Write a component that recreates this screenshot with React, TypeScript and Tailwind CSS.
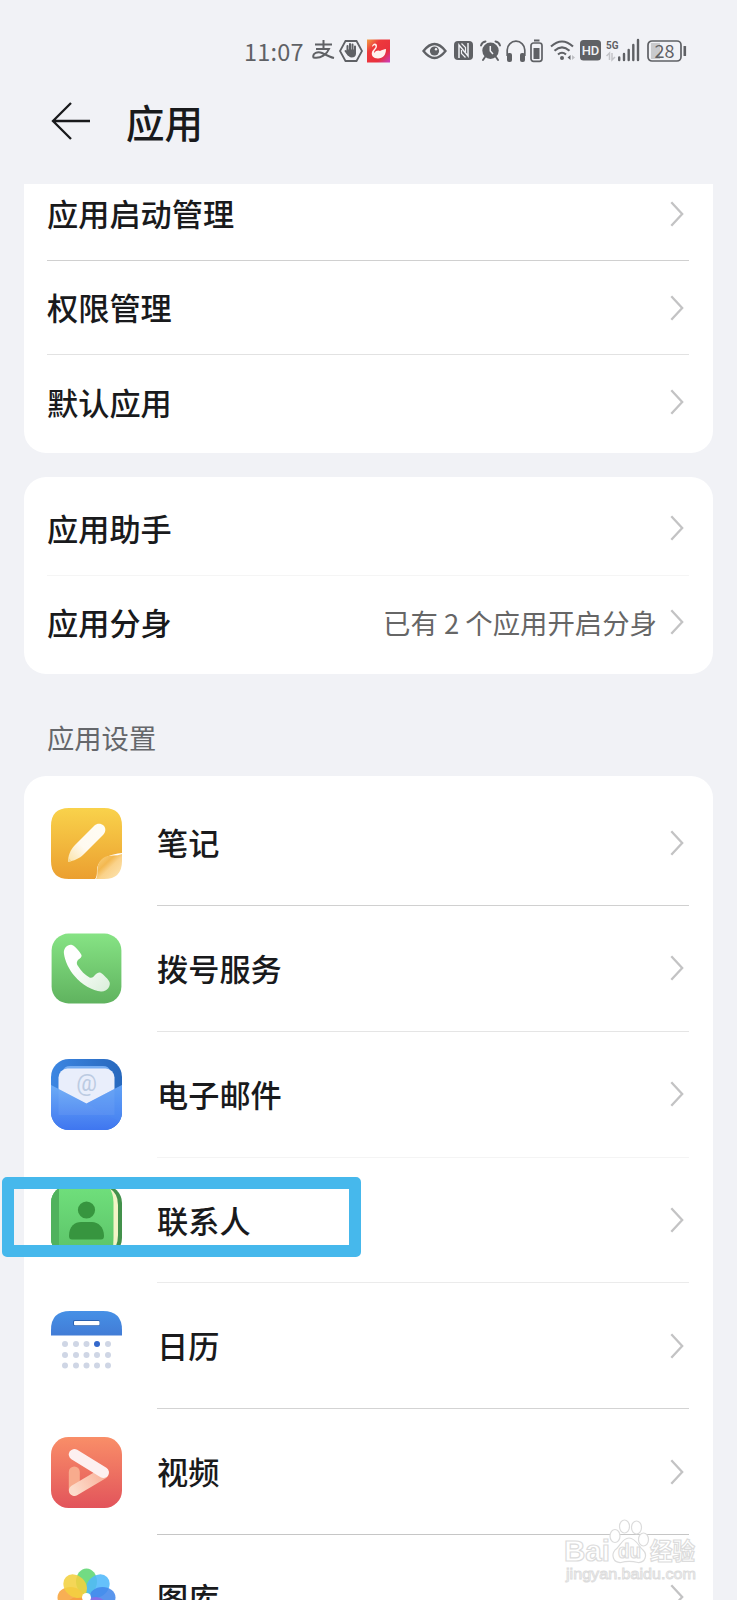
import type { ReactNode } from "react";
import clsx from "clsx";

const ink = "#5f6165";

const Chevron = () => (
  <svg className="mr-[5px] shrink-0" width="14" height="26" viewBox="0 0 14 26" fill="none">
    <path d="M1.3 1.2 12.2 13 1.3 24.8" stroke="#c3c3c4" strokeWidth="2.3" />
  </svg>
);

const NotesIcon = () => (
  <svg width="71" height="71" viewBox="0 0 71 71">
    <defs>
      <linearGradient id="notes" x1="0" y1="0" x2="0" y2="1">
        <stop offset="0" stopColor="#f9d24b" />
        <stop offset="1" stopColor="#eb9f30" />
      </linearGradient>
      <linearGradient id="pen" x1="1" y1="0" x2="0" y2="1">
        <stop offset="0" stopColor="#fffdf4" />
        <stop offset="0.6" stopColor="#fffaf0" />
        <stop offset="1" stopColor="#fbe3a8" />
      </linearGradient>
      <linearGradient id="curl" x1="0" y1="0" x2="1" y2="1">
        <stop offset="0" stopColor="#fbd88b" />
        <stop offset="0.38" stopColor="#f3b850" />
        <stop offset="0.55" stopColor="#fad28a" />
        <stop offset="1" stopColor="#fde6b5" />
      </linearGradient>
    </defs>
    <path d="M18 0H53Q71 0 71 18V45C60 46 47 50 46 62Q46 70 44 71H18Q0 71 0 53V18Q0 0 18 0Z" fill="url(#notes)" />
    <path d="M71 46V53Q71 71 53 71H45C47 68 46 65 46.500 60C48 50 55 47.500 62 47.500Q67 47.500 71 46Z" fill="url(#curl)" />
    <path d="M17 54C17 48 19 42 24 37L43.500 17.500C46 15 50 15 52.500 17.500C55 20 55 24 52 27L33 46C28 51 23 52.500 17 54Z" fill="url(#pen)" />
    <path d="M17 54 18 50.500 20.500 53Z" fill="#f5d78a" />
  </svg>
);

const PhoneIcon = () => (
  <svg width="71" height="71" viewBox="0 0 71 71">
    <defs>
      <linearGradient id="phone" x1="0" y1="0" x2="0" y2="1">
        <stop offset="0" stopColor="#86e384" />
        <stop offset="1" stopColor="#60b35f" />
      </linearGradient>
      <linearGradient id="handset" x1="0" y1="0" x2="1" y2="1">
        <stop offset="0.3" stopColor="#ffffff" />
        <stop offset="1" stopColor="#d9eed9" />
      </linearGradient>
    </defs>
    <rect x="0.600" y="0.600" width="69.800" height="69.800" rx="17" fill="url(#phone)" />
    <path
      d="M13 21C12 15 17 11 21 12C24 13 29 19 30.500 22C31 24 29.500 25 27.500 26.500C26 28 25 30 27 33C30 38 34 42 38.500 44.500C41 45.500 42.500 44 44 42C46 40 48 39 50 40C53 42 57 46 58.500 49C60 53 56 59 50 58.500C42 58 30 51 24 43.500C18 37 14 28 13 21Z"
      fill="url(#handset)"
    />
  </svg>
);

const MailIcon = () => (
  <svg width="71" height="71" viewBox="0 0 71 71">
    <defs>
      <linearGradient id="mailBack" x1="0" y1="0" x2="1" y2="0">
        <stop offset="0" stopColor="#3c86e2" />
        <stop offset="1" stopColor="#2768bd" />
      </linearGradient>
      <linearGradient id="mailFront" x1="0" y1="0" x2="0" y2="1">
        <stop offset="0" stopColor="#6cacf6" />
        <stop offset="1" stopColor="#3f76f0" />
      </linearGradient>
      <clipPath id="mailClip">
        <rect width="71" height="71" rx="18" />
      </clipPath>
    </defs>
    <g clipPath="url(#mailClip)">
      <rect width="71" height="71" fill="url(#mailBack)" />
      <path d="M12 12Q13 7 19 7H52Q58 7 59 12Z" fill="#77aef2" />
      <rect x="7.500" y="9.500" width="56" height="50" rx="9" fill="#e9eefb" />
      <text x="35.500" y="31.500" textAnchor="middle" fontFamily="Roboto, sans-serif" fontSize="23" fill="#bccbe2">
        @
      </text>
      <path d="M0 26 35.500 44.500 71 26V71H0Z" fill="url(#mailFront)" />
      <path d="M35.500 44.500 71 26V64Z" fill="#4d8cf3" opacity="0.350" />
      <path d="M7.500 30 35.500 44.500 63.500 30V56H7.500Z" fill="#fff" opacity="0.060" />
    </g>
  </svg>
);

const ContactsIcon = () => (
  <svg width="71" height="71" viewBox="0 0 71 71">
    <defs>
      <linearGradient id="cover" x1="0" y1="0" x2="0" y2="1">
        <stop offset="0" stopColor="#70e07c" />
        <stop offset="1" stopColor="#5bc268" />
      </linearGradient>
      <clipPath id="contactsClip">
        <rect width="71" height="71" rx="18" />
      </clipPath>
    </defs>
    <g clipPath="url(#contactsClip)">
      <rect width="71" height="71" fill="#43914b" />
      <path d="M50 3H58Q67 8 67 20V50Q67 64 58 69H50Z" fill="#f3f4c6" />
      <path d="M0 0H57Q62.500 8 62.500 18V53Q62.500 63 61 71H0Z" fill="url(#cover)" />
      <rect width="8" height="71" fill="#50b25d" />
    </g>
    <circle cx="35.500" cy="25" r="8.600" fill="#37953f" />
    <path d="M18 51C18 41 24 37 30 37H41C47 37 53 42 53 51Q53 54.500 50 54.500H21Q18 54.500 18 51Z" fill="#37953f" />
  </svg>
);

const CalendarIcon = () => (
  <svg width="71" height="71" viewBox="0 0 71 71">
    <defs>
      <linearGradient id="calendar" x1="0" y1="0" x2="0" y2="1">
        <stop offset="0" stopColor="#4690e6" />
        <stop offset="1" stopColor="#427cd6" />
      </linearGradient>
    </defs>
    <path d="M0 24.500V19Q0 0 19 0H52Q71 0 71 19V24.500Z" fill="url(#calendar)" />
    <rect x="22" y="9" width="27" height="6" rx="2" fill="#2a62b1" />
    <rect x="23" y="10" width="25.500" height="4.200" rx="1" fill="#fff" />
    {[33, 44, 54.5].map((cy, row) =>
      [14, 25, 35.5, 46, 57].map((cx, col) => (
        <circle key={`${row}-${col}`} cx={cx} cy={cy} r="3" fill={row === 0 && col === 3 ? "#3468cb" : "#cfd6e5"} />
      ))
    )}
  </svg>
);

const VideoIcon = () => (
  <svg width="71" height="71" viewBox="0 0 71 71">
    <defs>
      <linearGradient id="video" x1="0" y1="0" x2="0" y2="1">
        <stop offset="0" stopColor="#f98e68" />
        <stop offset="1" stopColor="#e2545b" />
      </linearGradient>
      <linearGradient id="bar" gradientUnits="userSpaceOnUse" x1="52" y1="36" x2="23" y2="53">
        <stop offset="0" stopColor="#f9b29b" />
        <stop offset="1" stopColor="#fcdccb" />
      </linearGradient>
    </defs>
    <rect width="71" height="71" rx="17.500" fill="url(#video)" />
    <g strokeLinecap="round" strokeWidth="11">
      <path d="M23.300 35V53" stroke="#f8ab8d" />
      <path d="M23.300 53.500 52 36.500" stroke="url(#bar)" />
      <path d="M23.300 17.500 52.500 35.500" stroke="#fdf0f0" />
    </g>
  </svg>
);

const petals = ["#5fd672", "#50b8fb", "#4387ea", "#8a6be8", "#e26bc0", "#f2685f", "#f7a43c", "#f3d040"];

const GalleryIcon = () => (
  <svg width="71" height="71" viewBox="0 0 71 71">
    {petals.map((color, i) => (
      <ellipse
        key={color}
        cx="35.500"
        cy="19.500"
        rx="10.500"
        ry="13"
        fill={color}
        opacity="0.880"
        transform={`rotate(${i * 45} 35.500 35.500)`}
      />
    ))}
    <circle cx="35.500" cy="35.500" r="4.500" fill="#fff" />
  </svg>
);

type RowProps = {
  title: string;
  value?: string;
  line?: string;
};

const Row = ({ title, value, line }: RowProps) => (
  <div className={clsx("flex h-[94.2px] items-center border-b", line || "border-transparent")}>
    <span className="flex-1 text-[31.2px] font-medium">{title}</span>
    {value && <span className="mr-[13px] text-[27.4px] text-[#666666]">{value}</span>}
    <Chevron />
  </div>
);

const AppRow = ({ title, icon, line }: { title: string; icon: ReactNode; line: string }) => (
  <div className="flex h-[125.8px]">
    <div className="flex w-[110px] shrink-0 items-center pl-1">{icon}</div>
    <div className={clsx("flex flex-1 items-center border-b", line)}>
      <span className="flex-1 text-[31.2px] font-medium">{title}</span>
      <Chevron />
    </div>
  </div>
);

const apps = [
  { title: "笔记", icon: <NotesIcon />, line: "border-[#d0d0d0]" },
  { title: "拨号服务", icon: <PhoneIcon />, line: "border-[#e5e5e5]" },
  { title: "电子邮件", icon: <MailIcon />, line: "border-[#f4f4f4]" },
  { title: "联系人", icon: <ContactsIcon />, line: "border-[#ebebeb]" },
  { title: "日历", icon: <CalendarIcon />, line: "border-[#d3d3d3]" },
  { title: "视频", icon: <VideoIcon />, line: "border-[#c6c6c6]" },
  { title: "图库", icon: <GalleryIcon />, line: "border-transparent" },
];

const StatusBar = () => (
  <div className="flex h-[26px] items-center text-[#5f6165]">
    <span className="ml-[244px] w-[68px] font-['Noto_Sans_CJK_SC',sans-serif] text-[23.5px] leading-[26px] tracking-[0.2px]">
      11:07
    </span>
    <svg width="23" height="26" viewBox="0 0 23 26" fill="none" stroke={ink} strokeWidth="2">
      <path d="M3 6.500H20M11.500 2V11M4 11H17C15 16 9 21 1.500 19.500C0 15 6 13 10 15C14 17 18 19 22 20" />
    </svg>
    <svg className="ml-[4px]" width="24" height="26" viewBox="0 0 24 26" fill="none">
      <path d="M6.500 3H17.500L23 13 17.500 23H6.500L1 13Z" stroke={ink} strokeWidth="1.800" />
      <path d="M8.500 13V8M11 12V6M13.500 12V6.500M16 13V8.500M6.500 13 9.500 17" stroke={ink} strokeWidth="2" strokeLinecap="round" />
      <path d="M7.800 11.500H17V15.500Q17 19.500 12.500 19.500Q10 19.500 7.800 15.500Z" fill={ink} />
    </svg>
    <svg className="ml-[4px]" width="23" height="26" viewBox="0 0 23 26">
      <defs>
        <linearGradient id="swan" x1="0" y1="0" x2="1" y2="1">
          <stop offset="0" stopColor="#f1a144" />
          <stop offset="0.300" stopColor="#ee3a3b" />
          <stop offset="0.700" stopColor="#e8303e" />
          <stop offset="1" stopColor="#c93fc4" />
        </linearGradient>
      </defs>
      <rect y="1.500" width="23" height="23" fill="url(#swan)" />
      <path
        d="M5 9C5 5 10 4 10 8C10 11 7 12 7 15C9 12 12 12 13 13C15 12 17 11 19 11C19 17 16 20.500 11 20.500C6 20.500 4 17 5 14C6 11.500 9 10 8.500 8C8 6.500 7 7 5 9Z"
        fill="#fff3ee"
      />
    </svg>
    <svg className="ml-[32px]" width="25" height="26" viewBox="0 0 25 26" fill="none">
      <path d="M1.500 13Q12.500 -1 23.500 13Q12.500 27 1.500 13Z" stroke={ink} strokeWidth="2.300" />
      <circle cx="12.500" cy="13" r="4.600" fill={ink} />
      <circle cx="14" cy="11.300" r="1.200" fill="#f1f2f6" />
    </svg>
    <svg className="ml-[7px]" width="19" height="26" viewBox="0 0 19 26" fill="none">
      <rect y="3" width="19" height="19" rx="4" fill={ink} />
      <path d="M5 20V7L14 18V5" stroke="#f1f2f6" strokeWidth="1.500" transform="translate(0 0)" />
      <path d="M7.500 5.500 11.500 9.500V14M7.500 12V15.500L11.500 19.500" stroke="#f1f2f6" strokeWidth="1.200" />
    </svg>
    <svg className="ml-[7px]" width="21" height="26" viewBox="0 0 21 26" fill="none">
      <circle cx="10.500" cy="12.800" r="8.200" fill={ink} />
      <path d="M1 7.500Q2 4 5.500 3.500M20 7.500Q19 4 15.500 3.500M5 19 3 22M16 19 18 22" stroke={ink} strokeWidth="1.900" strokeLinecap="round" />
      <path d="M10.300 8V13L13 16" stroke="#f1f2f6" strokeWidth="1.500" />
    </svg>
    <svg className="ml-[5px]" width="20" height="26" viewBox="0 0 20 26" fill="none">
      <path d="M1.200 18V12A8.800 8.800 0 0 1 18.800 12V18" stroke={ink} strokeWidth="1.700" />
      <rect x="1" y="15" width="5" height="9" rx="2" fill={ink} />
      <rect x="14" y="15" width="5" height="9" rx="2" fill={ink} />
    </svg>
    <svg className="ml-[4px]" width="13" height="26" viewBox="0 0 13 26" fill="none">
      <rect x="4" y="1.500" width="5.500" height="2" fill={ink} />
      <rect x="1" y="5" width="11" height="18.300" rx="2.500" stroke={ink} strokeWidth="1.700" />
      <rect x="3.500" y="10" width="6" height="11" fill={ink} />
    </svg>
    <svg className="ml-[7px]" width="25" height="26" viewBox="0 0 25 26" fill="none">
      <path d="M1 8.500Q12 -1.500 23 8.500M4.500 12.800Q12 6 19.500 12.800M8 16.500Q12 13 16 16.500" stroke={ink} strokeWidth="2.100" />
      <circle cx="12" cy="20" r="2" fill={ink} />
      <path d="M20.500 17V22L17.500 19.500Z" fill={ink} />
      <path d="M22 17V22L25 19.500Z" fill="#bfc0c4" />
    </svg>
    <svg className="ml-[5px]" width="21" height="26" viewBox="0 0 21 26">
      <rect y="2" width="21" height="20.500" rx="3.500" fill={ink} />
      <text x="10.500" y="17" textAnchor="middle" fontFamily="Roboto, sans-serif" fontWeight="500" fontSize="13" fill="#f1f2f6">
        HD
      </text>
    </svg>
    <svg className="ml-[5px]" width="34" height="26" viewBox="0 0 34 26" fill="none">
      <text x="0" y="10.500" fontFamily="Roboto, sans-serif" fontWeight="700" fontSize="11.500" textLength="12.500" lengthAdjust="spacingAndGlyphs" fill={ink}>
        5G
      </text>
      <path d="M3.500 22V15L0.500 18M6 15V22L9 19" stroke="#c3c4c8" strokeWidth="1.500" />
      <path d="M13.200 19.500V22M18 16V22M22.700 12V22M27.300 7V22M32 2V22" stroke={ink} strokeWidth="2.400" strokeLinecap="round" />
    </svg>
    <svg className="ml-[7px]" width="41" height="26" viewBox="0 0 41 26" fill="none">
      <rect x="4" y="5" width="9" height="16" fill="#c9cacd" />
      <rect x="1" y="3" width="33" height="20" rx="4" stroke={ink} strokeWidth="1.700" />
      <text x="17.500" y="20" textAnchor="middle" fontFamily="'Noto Sans CJK SC', sans-serif" fontSize="18" fill={ink}>
        28
      </text>
      <rect x="36.500" y="8" width="2.600" height="10" rx="0.600" fill={ink} />
    </svg>
  </div>
);

const Watermark = () => (
  <svg className="absolute left-[556px] top-[1514px]" width="150" height="74" viewBox="0 0 150 74" fill="#ffffff" stroke="#dcdcdc">
    <g strokeWidth="1.200" fontFamily="'Liberation Sans', 'Noto Sans CJK SC', sans-serif" fontWeight="700">
      <text x="8" y="47" fontSize="30" textLength="46" lengthAdjust="spacingAndGlyphs">
        Bai
      </text>
      <ellipse cx="59" cy="22" rx="5" ry="6.500" />
      <ellipse cx="68.500" cy="12.500" rx="5" ry="6.500" />
      <ellipse cx="80.500" cy="13.500" rx="5" ry="6.500" />
      <ellipse cx="87.500" cy="25.500" rx="5" ry="6.500" />
      <path d="M73 24C80 24 83 33 87 36C92 41 89 49 82 48.500C76 47 70 47 65 48.500C57 49 55 41 59 36C64 33 66 24 73 24Z" />
      <text x="62" y="44" fontSize="20" textLength="23" lengthAdjust="spacingAndGlyphs">
        du
      </text>
      <text x="94" y="46" fontSize="24" textLength="45" lengthAdjust="spacingAndGlyphs">
        经验
      </text>
      <text x="10" y="65" fontSize="15" fontWeight="400" textLength="130" lengthAdjust="spacingAndGlyphs" strokeWidth="0.900">
        jingyan.baidu.com
      </text>
    </g>
  </svg>
);

const App = () => {
  return (
    <div className="relative h-[1600px] w-[737px] overflow-hidden bg-[#f1f2f6] pt-[38px] font-['Noto_Sans_CJK_SC',sans-serif] text-[#191a1c]">
      <StatusBar />
      <header className="flex h-[120px] items-center pb-[6px] pl-[51px]">
        <svg width="41" height="40" viewBox="0 0 41 40" fill="none">
          <path d="M39 20H2.500M20 2 2 20 20 38" stroke="#191a1c" strokeWidth="2.300" />
        </svg>
        <h1 className="ml-[34px] text-[38.5px] font-medium leading-[50px]">应用</h1>
      </header>

      <main className="px-6">
        <section className="h-[269px] overflow-hidden rounded-b-[22px] bg-white pl-[23px] pr-6">
          <div className="-mt-[17px]">
            <Row title="应用启动管理" line="border-[#d0d0d0]" />
            <Row title="权限管理" line="border-[#e2e2e2]" />
            <Row title="默认应用" />
          </div>
        </section>

        <section className="mt-6 h-[197px] rounded-[22px] bg-white pl-[23px] pr-6 pt-[4.6px]">
          <Row title="应用助手" line="border-[#f5f5f5]" />
          <Row title="应用分身" value="已有 2 个应用开启分身" />
        </section>

        <h2 className="flex h-[102px] items-center pl-[23px] pt-[24px] text-[27.3px] text-[#65676b]">应用设置</h2>

        <section className="rounded-t-[22px] bg-white pl-[23px] pr-6 pt-[4.2px]">
          {apps.map((app) => (
            <AppRow key={app.title} {...app} />
          ))}
        </section>
      </main>

      <div className="absolute left-[2px] top-[1177px] h-[80px] w-[359px] rounded-[5px] border-[12px] border-[#46b8ec]" />
      <Watermark />
    </div>
  );
};

export default App;
